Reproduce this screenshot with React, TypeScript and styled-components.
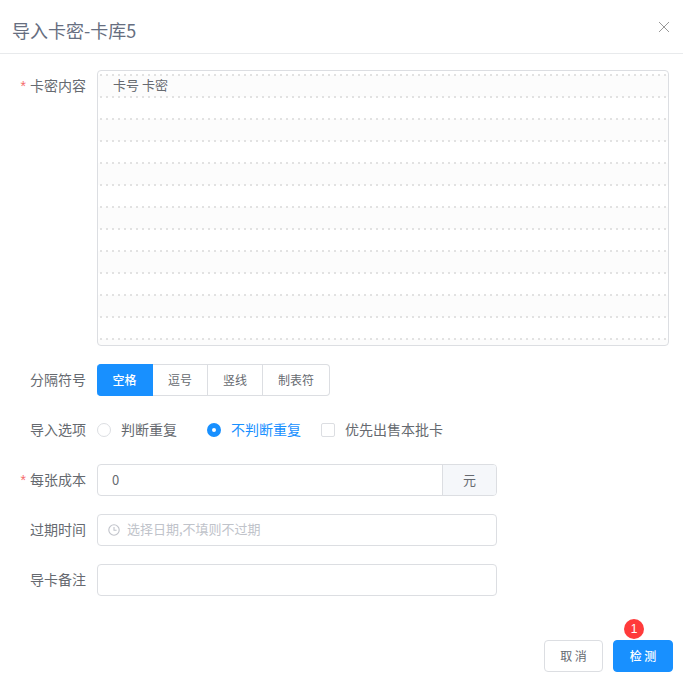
import React from "react";
import styled, { createGlobalStyle } from "styled-components";

const GlobalStyle = createGlobalStyle`
  html, body {
    margin: 0;
    background: #fff;
    font-family: "Noto Sans CJK SC", "Liberation Sans", sans-serif;
  }
  * {
    box-sizing: border-box;
  }
`;

const Modal = styled.div`
  width: 683px;
  height: 688px;
  background: #fff;
`;

const Header = styled.div`
  display: flex;
  align-items: center;
  justify-content: space-between;
  height: 54px;
  padding: 6px 13px 0 12px;
  border-bottom: 1px solid #e8eaec;
`;

const Title = styled.div`
  font-size: 18px;
  font-weight: 400;
  color: #666e80;
`;

const CloseButton = styled.button`
  display: flex;
  padding: 0;
  margin-bottom: 5px;
  border: 0;
  background: none;
  color: #999;
`;

const Form = styled.div`
  display: flex;
  flex-direction: column;
  gap: 18px;
  padding-top: 16px;
`;

const Row = styled.div`
  display: flex;
  align-items: flex-start;
`;

const Label = styled.label<{ $required?: boolean }>`
  flex: none;
  width: 97px;
  height: 32px;
  padding-right: 11px;
  font-size: 14px;
  font-weight: 400;
  line-height: 30px;
  text-align: right;
  color: #666a70;

  &::before {
    content: ${({ $required }) => ($required ? '"*"' : "none")};
    margin-right: 4px;
    font-family: "Liberation Sans", sans-serif;
    color: #f56c6c;
  }
`;

const CardLabel = styled(Label)`
  height: 30px;
`;

const CardText = styled.textarea`
  display: block;
  width: 572px;
  height: 276px;
  padding: 3px 15px 0;
  border: 1px solid #dcdee2;
  border-radius: 4px;
  outline: none;
  resize: none;
  overflow: hidden;
  font-family: inherit;
  font-size: 13px;
  font-weight: 400;
  line-height: 22px;
  color: #666a70;
  background-color: #fff;
  background-image:
    conic-gradient(from 270deg at 2px 2px, #e2e2e2 25%, transparent 0),
    linear-gradient(#fcfcfc 50%, #fff 50%);
  background-size: 6px 22px, 100% 44px;
  background-position: 2px 3px, 0 4px;
  background-repeat: repeat;
`;

const Segments = styled.div`
  display: flex;
  height: 32px;
`;

const Segment = styled.div<{ $active?: boolean }>`
  display: flex;
  align-items: center;
  justify-content: center;
  padding: 0 15px 2px;
  border: 1px solid ${({ $active }) => ($active ? "#1890ff" : "#dcdee2")};
  border-left: 0;
  font-size: 12px;
  font-weight: ${({ $active }) => ($active ? 500 : 400)};
  color: ${({ $active }) => ($active ? "#fff" : "#666a70")};
  background: ${({ $active }) => ($active ? "#1890ff" : "#fff")};

  &:first-child {
    width: 56px;
    border-radius: 4px 0 0 4px;
  }

  &:last-child {
    border-radius: 0 4px 4px 0;
  }
`;

const Options = styled.div`
  display: flex;
  align-items: center;
  height: 32px;
`;

const Option = styled.div<{ $active?: boolean; $gap?: number }>`
  display: flex;
  align-items: center;
  gap: 10px;
  margin-right: ${({ $gap }) => $gap ?? 30}px;
  font-size: 14px;
  font-weight: 400;
  color: ${({ $active }) => ($active ? "#1890ff" : "#666a70")};
`;

const OptionText = styled.span`
  margin-top: -2px;
`;

const Radio = styled.span<{ $active?: boolean }>`
  width: 14px;
  height: 14px;
  border-radius: 50%;
  border: ${({ $active }) => ($active ? "5px solid #1890ff" : "1px solid #dcdee2")};
  background: #fff;
`;

const Check = styled.span`
  width: 14px;
  height: 14px;
  border: 1px solid #dcdee2;
  border-radius: 2px;
  background: #fff;
`;

const InputGroup = styled.div`
  display: flex;
  width: 400px;
  height: 32px;
  border: 1px solid #dcdee2;
  border-radius: 4px;
  overflow: hidden;
`;

const Input = styled.input`
  flex: 1;
  min-width: 0;
  padding: 0 15px 2px 14px;
  border: 0;
  outline: none;
  font-family: inherit;
  font-size: 13px;
  font-weight: 400;
  color: #666a70;
  background: none;

  &::placeholder {
    color: #c0c3ca;
  }
`;

const Addon = styled.div`
  display: flex;
  align-items: center;
  justify-content: center;
  flex: none;
  width: 54px;
  padding-bottom: 2px;
  border-left: 1px solid #dcdee2;
  font-size: 13px;
  font-weight: 400;
  color: #666a70;
  background: #f5f7fa;
`;

const ClockIcon = styled.span`
  display: flex;
  align-items: center;
  flex: none;
  padding-left: 10px;
  color: #c0c3ca;
`;

const DateInput = styled(Input)`
  padding-left: 7px;
  padding-bottom: 4px;
`;

const Footer = styled.div`
  display: flex;
  justify-content: flex-end;
  gap: 10px;
  margin-top: 44px;
  padding-right: 10px;
`;

const Button = styled.button<{ $primary?: boolean }>`
  position: relative;
  width: ${({ $primary }) => ($primary ? "60px" : "59px")};
  height: 32px;
  padding: 0 0 2px;
  border: 1px solid ${({ $primary }) => ($primary ? "#1890ff" : "#dcdee2")};
  border-radius: 4px;
  font-family: inherit;
  font-size: 12px;
  font-weight: ${({ $primary }) => ($primary ? 500 : 400)};
  color: ${({ $primary }) => ($primary ? "#fff" : "#666a70")};
  background: ${({ $primary }) => ($primary ? "#1890ff" : "#fff")};
`;

const Badge = styled.span`
  position: absolute;
  top: -22px;
  left: 10px;
  width: 20px;
  height: 20px;
  border-radius: 50%;
  font-family: "Liberation Sans", sans-serif;
  font-size: 12px;
  font-weight: 400;
  line-height: 20px;
  text-align: center;
  color: #fff;
  background: #ff3b3b;
`;

export default function App() {
  return (
    <Modal>
      <GlobalStyle />
      <Header>
        <Title>导入卡密-卡库5</Title>
        <CloseButton aria-label="关闭">
          <svg width="12" height="12" viewBox="0 0 12 12" fill="none" stroke="currentColor" strokeWidth="1">
            <path d="M1 1l10 10M11 1L1 11" />
          </svg>
        </CloseButton>
      </Header>
      <Form>
        <Row>
          <CardLabel $required>卡密内容</CardLabel>
          <CardText defaultValue="卡号 卡密" />
        </Row>
        <Row>
          <Label>分隔符号</Label>
          <Segments>
            <Segment $active>空格</Segment>
            <Segment>逗号</Segment>
            <Segment>竖线</Segment>
            <Segment>制表符</Segment>
          </Segments>
        </Row>
        <Row>
          <Label>导入选项</Label>
          <Options>
            <Option>
              <Radio />
              <OptionText>判断重复</OptionText>
            </Option>
            <Option $active $gap={20}>
              <Radio $active />
              <OptionText>不判断重复</OptionText>
            </Option>
            <Option>
              <Check />
              <OptionText>优先出售本批卡</OptionText>
            </Option>
          </Options>
        </Row>
        <Row>
          <Label $required>每张成本</Label>
          <InputGroup>
            <Input defaultValue="0" />
            <Addon>元</Addon>
          </InputGroup>
        </Row>
        <Row>
          <Label>过期时间</Label>
          <InputGroup>
            <ClockIcon>
              <svg width="12" height="12" viewBox="0 0 12 12" fill="none" stroke="currentColor" strokeWidth="1.1">
                <circle cx="6" cy="6" r="5.2" />
                <path d="M6 3v3.2h2.6" />
              </svg>
            </ClockIcon>
            <DateInput placeholder="选择日期,不填则不过期" />
          </InputGroup>
        </Row>
        <Row>
          <Label>导卡备注</Label>
          <InputGroup>
            <Input />
          </InputGroup>
        </Row>
      </Form>
      <Footer>
        <Button>取 消</Button>
        <Button $primary>
          检 测<Badge>1</Badge>
        </Button>
      </Footer>
    </Modal>
  );
}
